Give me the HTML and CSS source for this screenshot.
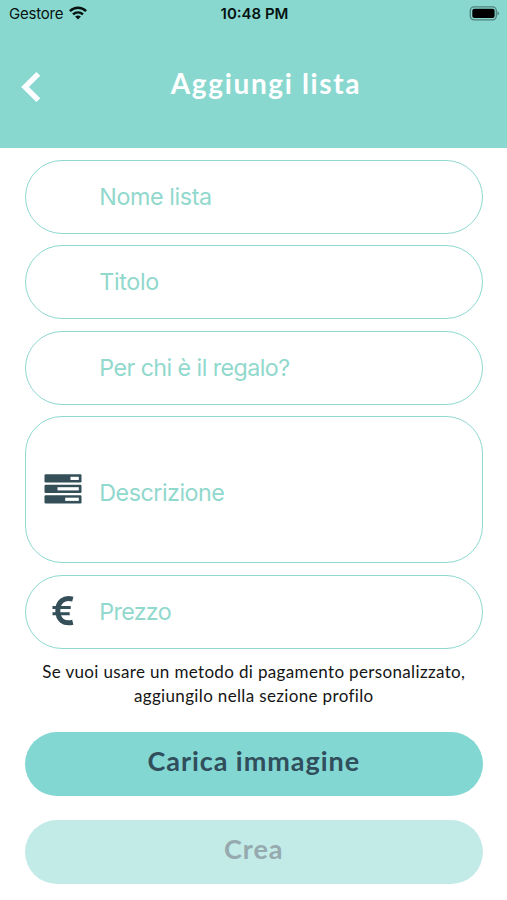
FILE: index.html
```html
<!DOCTYPE html>
<html lang="it">
<head>
<meta charset="utf-8">
<title>Aggiungi lista</title>
<link rel="stylesheet" href="styles.css">
</head>
<body>
<header class="header">
  <div class="status">
    <div class="carrier"><span>Gestore</span>
      <svg class="wifi" width="18" height="14" viewBox="0 0 18 14" fill="none" stroke="#061311" stroke-width="2.5"><path d="M.9 5.1C5.6.6 12.4.6 17.1 5.1"/><path d="M4 8.4C6.9 5.7 11.1 5.7 14 8.4"/><path d="M9 13.4L6.1 10.6Q9 8.2 11.9 10.6Z" fill="#061311" stroke="none"/></svg>
    </div>
    <span class="clock">10:48 PM</span>
    <svg class="battery" width="31" height="15" viewBox="0 0 31 15"><rect x="1.3" y=".8" width="26" height="13" rx="3.8" fill="none" stroke="#4f817b" stroke-width="1.3"/><rect x="3.3" y="2.7" width="22.3" height="9.3" rx="2" fill="#000"/><path d="M28.5 5Q31.5 7.3 28.5 9.8Z" fill="#4f817b"/></svg>
  </div>
  <div class="nav">
    <svg class="back" width="20" height="32" viewBox="0 0 20 32" fill="none" stroke="#fff" stroke-width="5.4"><path d="M18.3 2.8L5 16L18.3 29.2"/></svg>
    <h1 class="title">Aggiungi lista</h1>
  </div>
</header>
<main class="form">
  <div class="field"><span class="icon"></span><span class="label nome">Nome lista</span></div>
  <div class="field"><span class="icon"></span><span class="label titolo">Titolo</span></div>
  <div class="field"><span class="icon"></span><span class="label regalo">Per chi è il regalo?</span></div>
  <div class="field tall">
    <span class="icon"><svg width="38" height="30" viewBox="0 0 38 30"><g fill="#354f58"><rect x=".5" y=".3" width="37" height="8.2" rx="1.2"/><rect x=".5" y="10.7" width="37" height="8.2" rx="1.2"/><rect x=".5" y="21.2" width="37" height="8.2" rx="1.2"/></g><g fill="#fff"><rect x="26.5" y="2.8" width="8.3" height="3.2"/><rect x="13.5" y="13.2" width="21.3" height="3.2"/><rect x="21.2" y="23.7" width="13.6" height="3.2"/></g></svg></span>
    <span class="label descrizione">Descrizione</span>
  </div>
  <div class="field">
    <span class="icon"><svg width="22" height="30" viewBox="0 0 22 30" fill="none" stroke="#354f58"><path d="M20.8 3.2C11.5.8 5.8 6 5.8 14.8S11.5 28.5 20.8 26.2" stroke-width="5"/><path d="M.5 11.5H18.7M.5 17.7H17.7" stroke-width="3.1"/></svg></span>
    <span class="label prezzo">Prezzo</span>
  </div>
  <p class="note">Se vuoi usare un metodo di pagamento personalizzato,<br>aggiungilo nella sezione profilo</p>
  <div class="button"><span class="carica">Carica immagine</span></div>
  <div class="button disabled"><span class="crea">Crea</span></div>
</main>
</body>
</html>
```
FILE: styles.css
```css
* { box-sizing: border-box; }
body { margin: 0; height: 900px; overflow: hidden; background: #fff; font-family: Inter, sans-serif; }
.header { height: 147.5px; background: #89d8d0; }
.status { height: 28px; padding: 0 7px 0 9px; display: grid; grid-template-columns: 1fr auto 1fr; align-items: center; color: #061311; }
.carrier { display: flex; align-items: center; gap: 6px; font-size: 15px; letter-spacing: -0.2px; }
.carrier span, .clock { margin-top: -1px; }
.wifi { margin-top: -2px; }
.clock { font-size: 15px; font-weight: 600; }
.battery { justify-self: end; margin-top: -2px; }
.nav { height: 116px; display: grid; grid-template-columns: 42px 1fr 42px; align-items: center; padding: 0 0 0 20px; }
.back { margin-top: 1px; }
.title { margin: -6px 0 0 5px; text-align: center; color: #fff; font: 700 28px/36px Lato, sans-serif; white-space: nowrap; letter-spacing: 1.65px; }
.form { padding: 12px 24.5px 0 25px; display: flex; flex-direction: column; }
.field { height: 74px; margin-bottom: 11.6px; border: 1px solid #8ed9d0; border-radius: 37px; display: flex; align-items: center; }
.tall { height: 147px; }
.icon { width: 73.3px; display: flex; justify-content: center; margin-top: -2px; }
.label { color: #91d8cd; font-size: 23.3px; line-height: 30px; white-space: nowrap; }
.nome { letter-spacing: -0.4px; }
.titolo { letter-spacing: -0.35px; }
.regalo { letter-spacing: -0.58px; }
.descrizione { padding-top: 7px; letter-spacing: -0.5px; }
.prezzo { letter-spacing: -0.7px; }
.note { margin: 0; text-align: center; font: 17px/24px Lato, sans-serif; letter-spacing: 0.35px; color: #151515; white-space: nowrap; }
.button { height: 64px; margin-top: 24px; border-radius: 32px; background: #83d7d3; color: #304e5b; display: flex; align-items: center; justify-content: center; font: 700 27px/36px Lato, sans-serif; letter-spacing: 0.95px; padding-bottom: 6px; }
.disabled { background: #c2ebe7; color: #96a9ae; }
```
